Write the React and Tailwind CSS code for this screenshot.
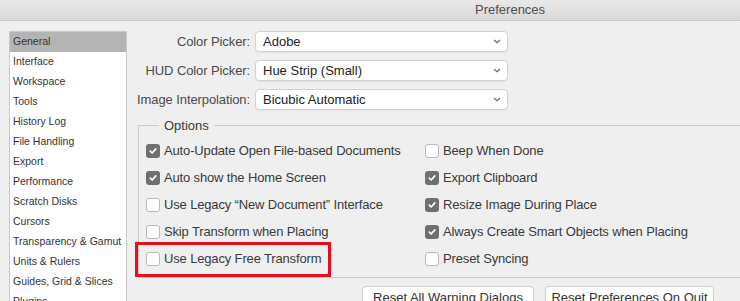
import React from "react";

const sections = [
  "General",
  "Interface",
  "Workspace",
  "Tools",
  "History Log",
  "File Handling",
  "Export",
  "Performance",
  "Scratch Disks",
  "Cursors",
  "Transparency & Gamut",
  "Units & Rulers",
  "Guides, Grid & Slices",
  "Plugins",
];

const pickers = [
  { label: "Color Picker:", value: "Adobe" },
  { label: "HUD Color Picker:", value: "Hue Strip (Small)" },
  { label: "Image Interpolation:", value: "Bicubic Automatic" },
];

// left / right option columns
const options = [
  [
    { text: "Auto-Update Open File-based Documents", checked: true },
    { text: "Beep When Done", checked: false },
  ],
  [
    { text: "Auto show the Home Screen", checked: true },
    { text: "Export Clipboard", checked: true },
  ],
  [
    { text: "Use Legacy \u201cNew Document\u201d Interface", checked: false },
    { text: "Resize Image During Place", checked: true },
  ],
  [
    { text: "Skip Transform when Placing", checked: false },
    { text: "Always Create Smart Objects when Placing", checked: true },
  ],
  [
    { text: "Use Legacy Free Transform", checked: false, marked: true },
    { text: "Preset Syncing", checked: false },
  ],
];

const CheckBox = ({ checked }) =>
  checked ? (
    <span className="flex h-[14px] w-[14px] shrink-0 items-center justify-center rounded-[3px] bg-[#6f6f6f]">
      <svg width="10" height="10" viewBox="0 0 10 10">
        <path
          d="M2.3 5.2 L4.2 7 L7.8 2.9"
          fill="none"
          stroke="white"
          strokeWidth="1.7"
          strokeLinecap="round"
          strokeLinejoin="round"
        />
      </svg>
    </span>
  ) : (
    <span className="h-[14px] w-[14px] shrink-0 rounded-[3px] border border-[#b9b9b9] bg-white" />
  );

const Option = ({ item }) => (
  <div className="relative flex h-[27px] items-center gap-[4px]">
    <CheckBox checked={item.checked} />
    <span className="whitespace-nowrap text-[13px] tracking-[-0.15px] text-[#3a3a3a]">{item.text}</span>
    {item.marked && (
      <span className="absolute left-[-11px] top-[-4px] h-[35px] w-[196px] border-[3px] border-[#e2101a]" />
    )}
  </div>
);

const App = () => {
  return (
    <div className="h-[301px] w-[740px] overflow-hidden bg-[#efefef] font-['Liberation_Sans',Arial,sans-serif]">
      {/* Title bar */}
      <div className="flex h-[21px] items-center border-b border-[#c6c6c6] bg-gradient-to-b from-[#e9e9e9] to-[#d9d9d9] pl-[475px] text-[13px] text-[#4f4f4f]">
        Preferences
      </div>

      <div className="flex">
        {/* Sidebar */}
        <div className="ml-[9px] mt-[10px] w-[118px] shrink-0 border border-[#c9c9c9] bg-white">
          {sections.map((name, i) => (
            <div
              key={name}
              className={`flex h-[20px] items-center whitespace-nowrap pl-[3px] text-[10.5px] text-[#333] ${
                i === 0 ? "bg-[#b4b4b4]" : ""
              }`}
            >
              {name}
            </div>
          ))}
        </div>

        {/* Main panel */}
        <div className="ml-[9px] mt-[10px]">
          <div className="grid grid-cols-[114px_253px] gap-x-[5px] gap-y-[8px]">
            {pickers.map((p) => (
              <React.Fragment key={p.label}>
                <div className="flex h-[21px] items-center justify-end whitespace-nowrap text-[13px] tracking-[-0.1px] text-[#4a4a4a]">
                  {p.label}
                </div>
                <div className="flex h-[21px] items-center justify-between rounded-[4px] border border-[#d2d2d2] bg-white pl-[7px] pr-[6px] text-[13px] text-[#222] shadow-[0_1px_1px_rgba(0,0,0,0.05)]">
                  <span>{p.value}</span>
                  <svg width="8" height="5" viewBox="0 0 8 5">
                    <path d="M1 1 L4 3.6 L7 1" fill="none" stroke="#6a6a6a" strokeWidth="1.2" />
                  </svg>
                </div>
              </React.Fragment>
            ))}
          </div>

          <fieldset className="ml-[2px] mt-[6px] w-[700px] border border-[#cbcbcb] pb-[4px] pl-[7px] pt-[2px]">
            <legend className="ml-[13px] px-[5px] text-[13px] text-[#3a3a3a]">Options</legend>
            <div className="grid grid-cols-[279px_auto]">
              {options.map(([left, right]) => (
                <React.Fragment key={left.text}>
                  <Option item={left} />
                  <Option item={right} />
                </React.Fragment>
              ))}
            </div>
          </fieldset>

          <div className="ml-[226px] mt-[8px] flex gap-[11px]">
            <button className="h-[24px] w-[172px] rounded-[4px] border border-[#cfcfcf] bg-white text-[13px] text-[#333]">
              Reset All Warning Dialogs
            </button>
            <button className="h-[24px] w-[169px] rounded-[4px] border border-[#cfcfcf] bg-white text-[13px] text-[#333]">
              Reset Preferences On Quit
            </button>
          </div>
        </div>
      </div>
    </div>
  );
};

export default App;
